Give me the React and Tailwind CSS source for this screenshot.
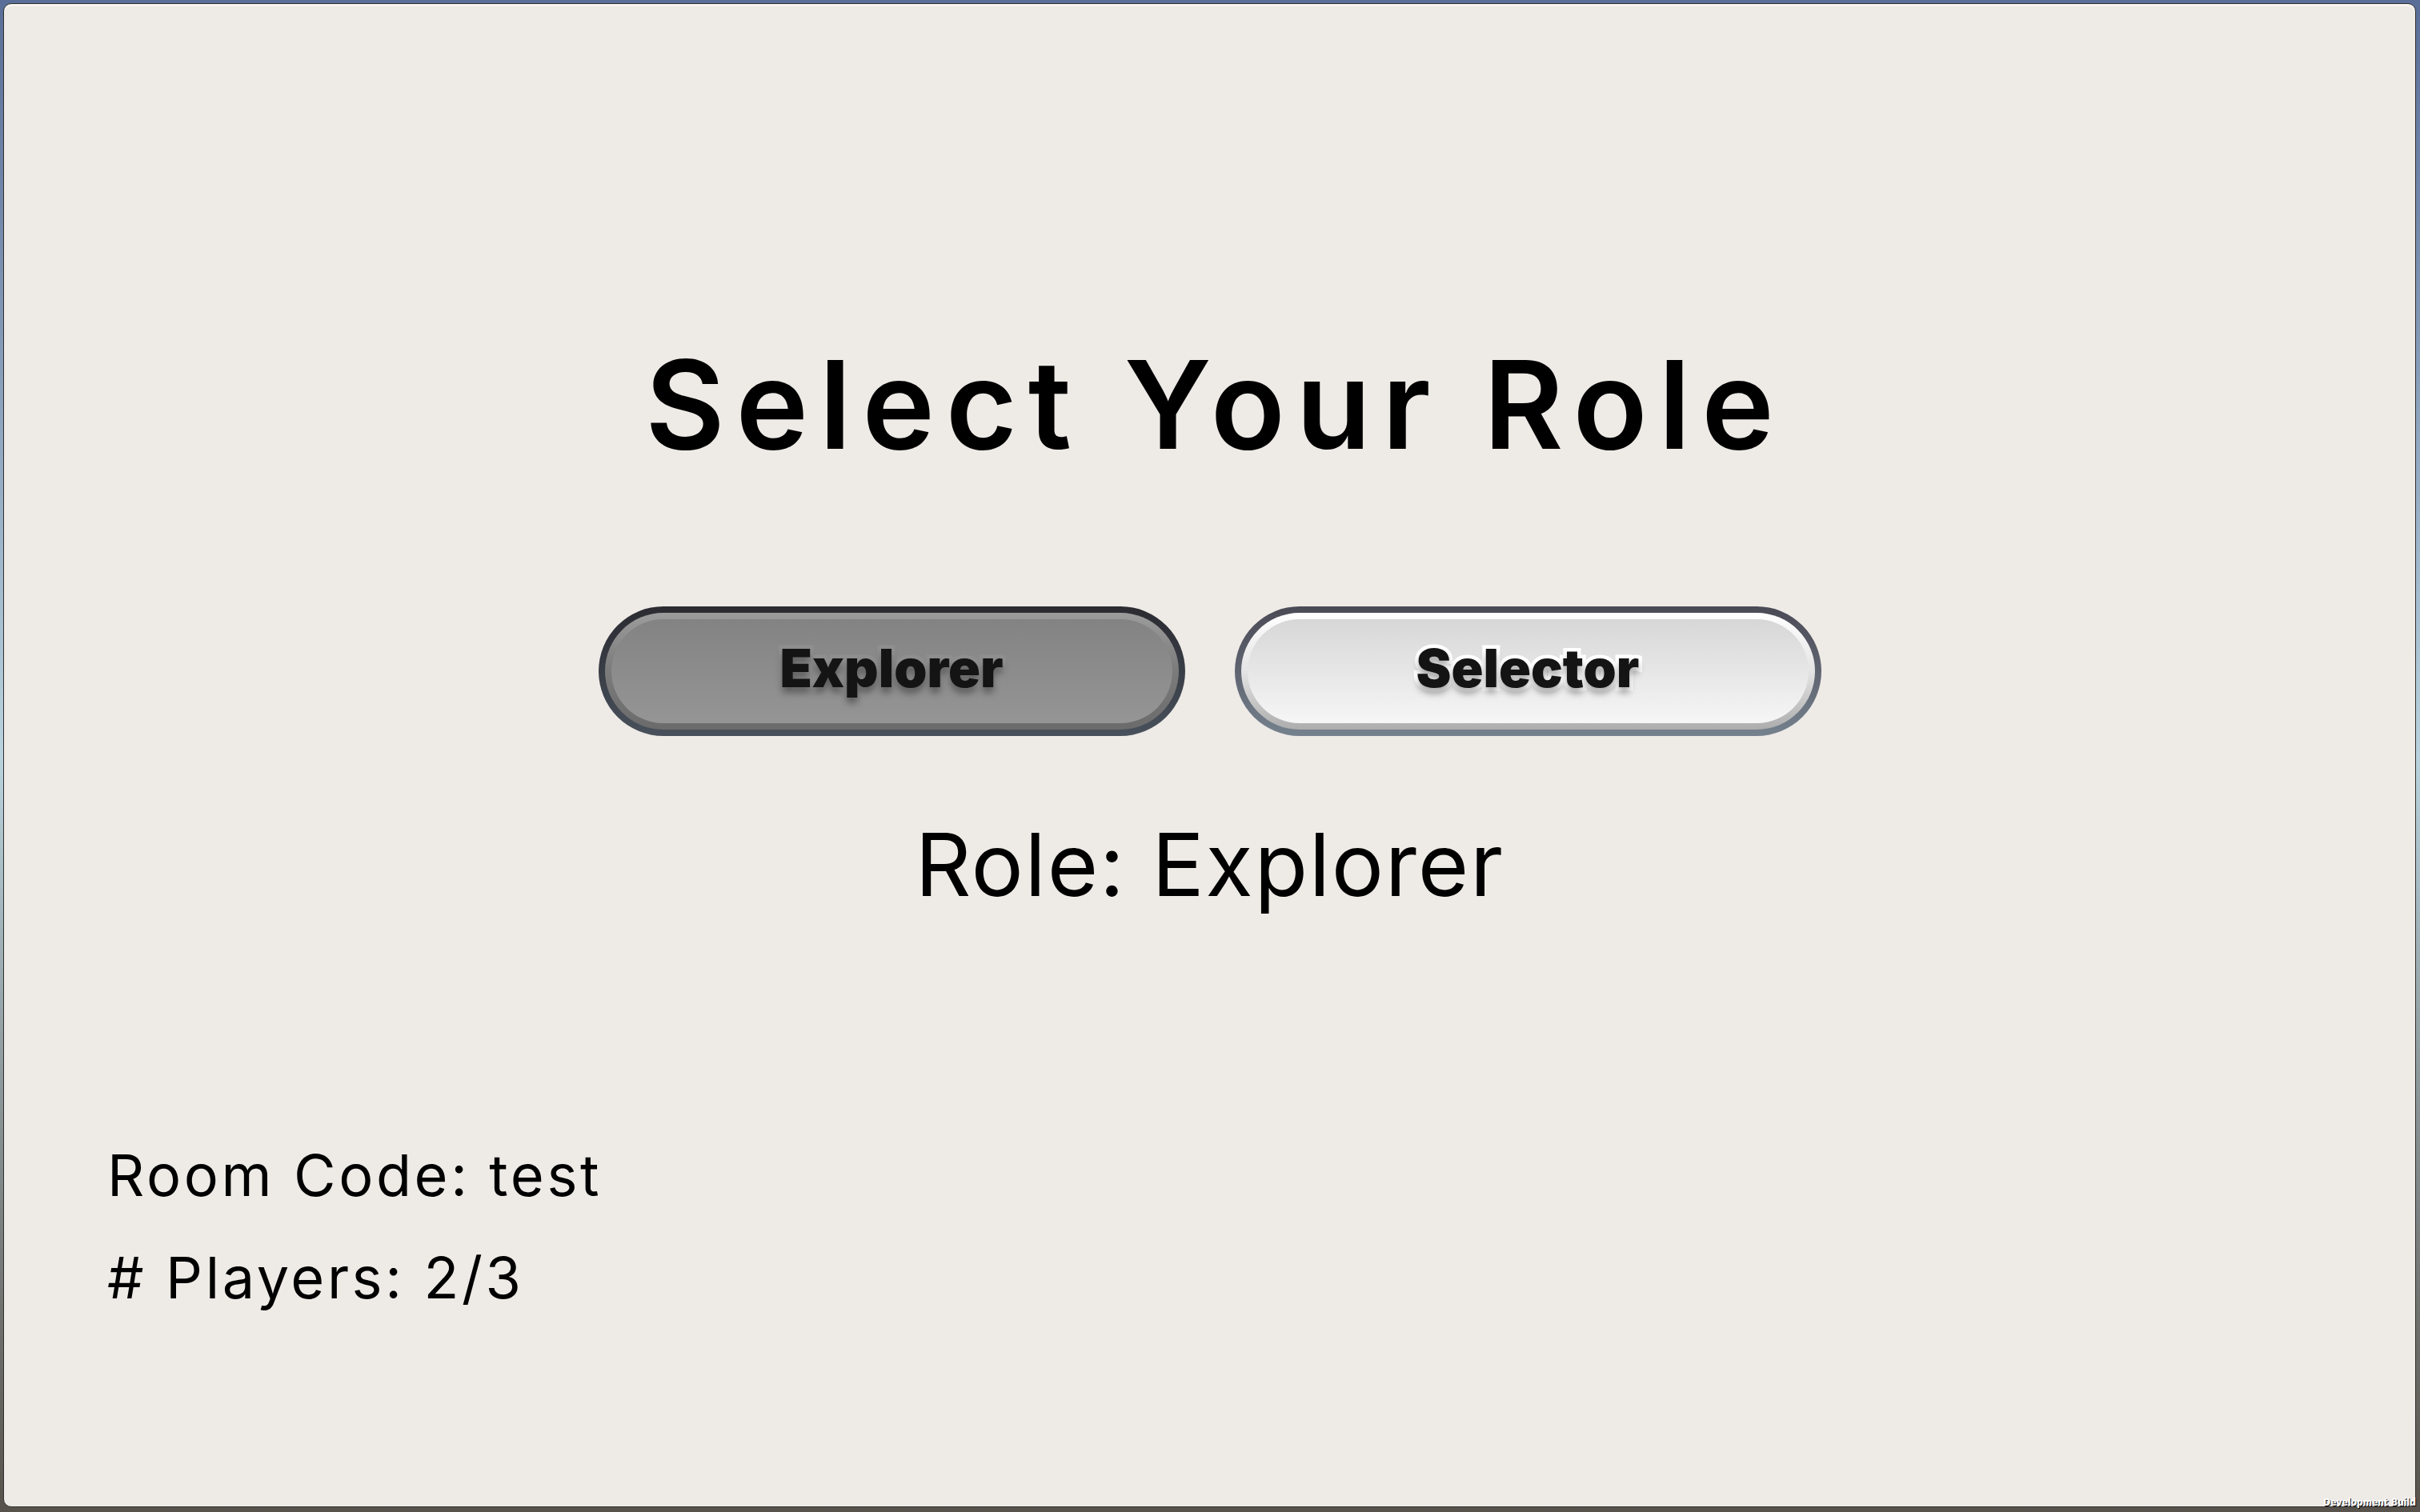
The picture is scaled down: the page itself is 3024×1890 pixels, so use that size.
import React, { useState } from 'react';

const RoleButton = ({ label, active, onClick }) => {
  // active = pressed/grey look, otherwise the light glossy look
  const frame = active
    ? 'bg-gradient-to-b from-[#2b2b31] to-[#48515c]'
    : 'bg-gradient-to-b from-[#4a4a55] to-[#75818e]';
  const ring = active
    ? 'bg-gradient-to-b from-[#9c9c9c] via-[#7b7b7b] to-[#6b6b6b]'
    : 'bg-gradient-to-b from-[#ffffff] via-[#e4e4e4] to-[#adadad]';
  const fill = active
    ? 'bg-gradient-to-b from-[#838383] to-[#959595]'
    : 'bg-gradient-to-b from-[#d7d7d7] to-[#f6f6f6]';
  const stroke = active
    ? '[-webkit-text-stroke:9px_#8f8f8f]'
    : '[-webkit-text-stroke:9px_#ffffff]';

  return (
    <button
      onClick={onClick}
      className={`w-[733px] h-[162px] rounded-full p-[8px] ${frame}`}
    >
      <div className={`w-full h-full rounded-full p-[8px] ${ring}`}>
        <div className={`w-full h-full rounded-full flex items-center justify-center ${fill}`}>
          <span
            className={`font-['Inter','Roboto',sans-serif] font-black text-[66px] leading-none text-[#141414] -mt-[8px] [paint-order:stroke_fill] ${stroke} [text-shadow:0_7px_8px_rgba(0,0,0,0.35)]`}
          >
            {label}
          </span>
        </div>
      </div>
    </button>
  );
};

const App = () => {
  const [role, setRole] = useState('Explorer');

  return (
    <div className="relative w-full h-[1890px] flex pt-[4px] pl-[4px] pr-[5px] pb-[6px] bg-gradient-to-b from-[#5a6e97] via-[#b9d3de] to-[#57524b]">
      <div className="flex-1 flex flex-col rounded-[10px] border border-[#2f2f2f] bg-[#eeeae6] shadow-[inset_0_3px_0_#f8f5f1] font-['Inter','Liberation_Sans',sans-serif] text-black">
        <h1 className="mt-[424px] text-center text-[153px] leading-none font-semibold tracking-[0.09em] pl-[0.09em]">
          Select Your Role
        </h1>

        <div className="mt-[176px] flex justify-center gap-[62px]">
          <RoleButton label="Explorer" active={role === 'Explorer'} onClick={() => setRole('Explorer')} />
          <RoleButton label="Selector" active={role === 'Selector'} onClick={() => setRole('Selector')} />
        </div>

        <div className="mt-[106px] text-center text-[109px] leading-none font-normal tracking-[0.015em]">
          Role: {role}
        </div>

        <div className="mt-[298px] pl-[129px] flex flex-col gap-[56px] text-[72px] leading-none font-normal tracking-[0.05em]">
          <div>Room Code: test</div>
          <div># Players: 2/3</div>
        </div>
      </div>

      <div className="absolute right-[5px] bottom-[6px] font-['DejaVu_Sans_Condensed','DejaVu_Sans',sans-serif] font-bold text-[12px] leading-none text-white [text-shadow:1px_1px_0_#000]">
        Development Build
      </div>
    </div>
  );
};

export default App;
